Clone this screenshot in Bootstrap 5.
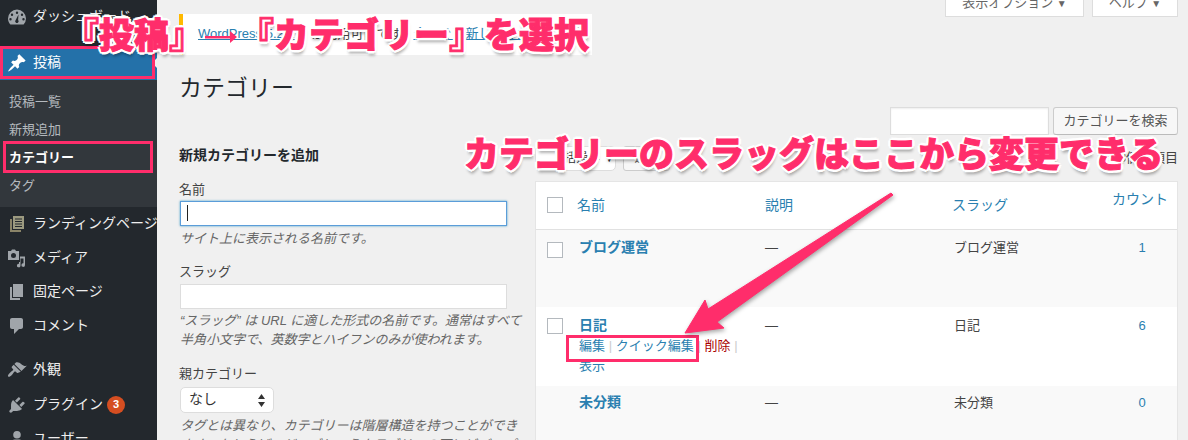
<!DOCTYPE html>
<html lang="ja">
<head>
  <meta charset="UTF-8">
  <title>カテゴリー</title>
  <link href="https://cdn.jsdelivr.net/npm/bootstrap@5.3.2/dist/css/bootstrap.min.css" rel="stylesheet">
  <style>
    html, body { height: 440px; overflow: hidden; }
    body { background: #f0f0f0; color: #444; font: 13px/1.4 "Liberation Sans", "Noto Sans CJK JP", sans-serif; }
    a { color: #2a7fb0; text-decoration: none; }
    .wp-root { height: 440px; overflow: hidden; }

    /* sidebar */
    .wp-side { width: 157px; flex: none; background: #23282d; height: 440px; overflow: hidden; }
    .side-item { height: 34px; padding-left: 7px; gap: 6px; color: #eee; font-size: 14px; white-space: nowrap; overflow: hidden; }
    .side-item svg { width: 20px; height: 20px; flex: none; fill: #a0a5aa; }
    .side-sep { margin-top: 12px; }
    .side-sep2 { margin-top: 10px; }
    .side-tall { height: 35px; }
    .side-current { background: #2471a9; color: #fff; position: relative; }
    .side-current svg { fill: #fff; }
    .side-current::after { content: ""; position: absolute; right: 0; top: 12px; border: 5px solid transparent; border-right-color: #f0f0f0; border-left: 0; }
    .side-sub { background: #32373c; padding: 8px 0 7px 9px; }
    .side-sub a { display: block; height: 28px; line-height: 28px; color: #b4b9be; font-size: 13px; }
    .side-sub a.now { color: #fff; font-weight: 700; }
    .up-badge { width: 18px; height: 18px; border-radius: 50%; background: #d54e21; color: #fff; font-size: 11px; font-weight: 700; margin-left: -2px; }

    /* main column */
    .wp-main { width: 1031px; padding: 0 10px 0 23px; }
    .meta-row { height: 14px; gap: 8px; }
    .meta-tab { height: 28px; margin-top: -11px; background: #fff; border: 1px solid #ddd; color: #666; font-size: 13px; line-height: 26px; text-align: center; }
    .meta-tab small { font-size: 10px; }
    .meta-a { width: 139px; }
    .meta-b { width: 86px; }
    .wp-notice { width: 413px; height: 41px; margin-left: -1px; background: #fff; border-left: 4px solid #ffb900; padding: 11px 0 0 15px; font-size: 13px; white-space: nowrap; overflow: hidden; }
    .wp-notice a { text-decoration: underline; }
    .notice-rest { margin-left: 17px; }
    .wp-title { font-size: 23px; font-weight: 400; line-height: 30px; color: #23282d; margin: 18px 0 0 -1px; }
    .search-row { margin-top: 4px; gap: 4px; }
    .wp-input { height: 28px; background: #fff; border: 1px solid #ddd; box-shadow: inset 0 1px 2px rgba(0,0,0,.07); }
    .search-box { width: 159px; }
    .wp-btn { width: 125px; height: 28px; background: #f7f7f7; border: 1px solid #ccc; border-bottom-color: #bbb; border-radius: 3px; color: #555; font-size: 13px; line-height: 26px; text-align: center; white-space: nowrap; }

    /* left form */
    .form-col { width: 327px; flex: none; padding-top: 10px; }
    .form-head { font-size: 14px; font-weight: 700; line-height: 20px; color: #23282d; margin: 0 0 16px -1px; }
    .form-lab { display: block; font-size: 13px; line-height: 18px; color: #444; margin-left: -1px; }
    .form-box { height: 25px; margin-top: 3px; background: #fff; border: 1px solid #ddd; }
    .form-box.on { margin-top: 2px; border-color: #5b9dd9; box-shadow: 0 0 2px rgba(30,140,190,.8); padding: 3px 0 0 6px; }
    .caret-bar { display: block; width: 1px; height: 16px; background: #222; }
    .form-help { font-size: 13px; line-height: 19px; font-style: italic; color: #666; margin: 2px 0 0; white-space: nowrap; }
    .form-help.lo { margin-top: 3px; }
    .gap-a { margin-top: 15px; }
    .gap-b { margin-top: 16px; }
    .parent-select { width: 94px; height: 26px; margin-top: 4px; background: #fff; border: 1px solid #ddd; border-radius: 5px; padding: 0 8px; font-size: 14px; color: #333; }
    .spin-arrows { width: 7px; height: 13px; fill: #333; }

    /* right table */
    .list-col { width: 643px; margin-left: 28px; flex: none; margin-top: 11px; }
    .nav-row { height: 35px; gap: 7px; }
    .bulk-box { width: 81px; height: 25px; background: #fff; border: 1px solid #ddd; border-radius: 5px; font-size: 12px; color: #333; line-height: 23px; padding-left: 28px; white-space: nowrap; overflow: hidden; }
    .apply-box { width: 47px; height: 25px; background: #f7f7f7; border: 1px solid #ccc; border-radius: 3px; font-size: 12px; line-height: 23px; text-align: center; color: #555; }
    .item-count { font-size: 13px; color: #444; line-height: 24px; }
    .list-wrap { background: #fff; border: 1px solid #e5e5e5; }
    .cat-table { --bs-table-bg: transparent; table-layout: fixed; font-size: 13px; margin: 0; }
    .cat-table > :not(caption) > * > * { padding: 8px 10px 10px; color: #444; box-shadow: none; vertical-align: top; }
    .cat-table thead th { height: 47px; font-weight: 400; font-size: 14px; padding: 14px 10px 10px 8px; border-bottom: 1px solid #e1e1e1; }
    .cat-table thead th.col-desc { padding-left: 10px; }
    .cat-table td { font-size: 13px; line-height: 19px; }
    .col-cb { width: 33px; }
    .col-name { width: 186px; }
    .col-desc { width: 189px; }
    .col-slug { width: 159px; }
    .cat-table > :not(caption) > * > .cell-count { text-align: center; padding-left: 7px; padding-right: 3px; }
    .cat-table thead th.cell-count { padding: 8px 5px 10px; }
    .cat-table > tbody > tr.alt-row > * { background: #f9f9f9; }
    .row-a td { height: 78px; }
    .cat-table > tbody > .row-b > td { height: 76px; padding-top: 9px; }
    .cat-table > tbody > .row-c > td { height: 60px; padding-top: 7px; }
    .cat-table > tbody > tr > td.cell-cb { padding: 12px 0 0 11px; }
    .cat-table > thead > tr > th.cell-cb { padding: 15px 0 0 11px; }
    .row-b .fake-check { margin-top: -1px; }
    .fake-check { display: block; width: 16px; height: 16px; background: #fff; border: 1px solid #b4b9be; }
    .cat-name { font-size: 14px; font-weight: 700; line-height: 18px; display: block; }
    .row-acts { font-size: 13px; line-height: 20px; margin-top: 2px; }
    .row-acts i { color: #ccc; font-style: normal; padding: 0 3.7px; }
    .act-del { color: #a00; }

    /* annotations over the screenshot */
    .anno { position: absolute; color: #ff2d6b; font-family: "Noto Sans CJK JP", sans-serif; font-weight: 900; font-size: 35px; line-height: 40px; white-space: nowrap;
      -webkit-text-stroke: 1px #ff2d6b;
      text-shadow: 3px 0 #fff, -3px 0 #fff, 0 3px #fff, 0 -3px #fff, 2px 2px #fff, -2px 2px #fff, 2px -2px #fff, -2px -2px #fff, 1px 5px 3px rgba(0,0,0,.3); }
    .anno-one { left: 64px; top: 13px; }
    .anno-two { left: 464px; top: 132px; }
    .anno-arrow { width: 32px; height: 16px; margin: 0 2px 0 1px; vertical-align: 3px; position: relative; z-index: 1; }
    .pink-box { position: absolute; border: 3px solid #ff2d6b; }
    .box-post { left: 0; top: 46px; width: 155px; height: 33px; }
    .box-cat { left: 3px; top: 141px; width: 150px; height: 32px; }
    .box-edit { left: 566px; top: 335px; width: 133px; height: 27px; }
    .big-arrow { position: absolute; left: 670px; top: 185px; width: 240px; height: 160px; filter: drop-shadow(1px 2px 2px rgba(0,0,0,.35)); }
  </style>
</head>
<body>
<div class="wp-root d-flex position-relative">

  <nav class="wp-side">
    <div class="side-item d-flex align-items-center">
      <svg viewBox="0 0 20 20"><path d="M10 2.500a9 9 0 0 0-9 9c0 2.400.9 4.500 2.400 6h13.200a9 9 0 0 0 2.400-6 9 9 0 0 0-9-9zM10 4.500a1.200 1.200 0 1 1 0 2.400 1.200 1.200 0 0 1 0-2.400zM5 6.500a1.200 1.200 0 1 1 0 2.400 1.200 1.200 0 0 1 0-2.400zM15 6.500a1.200 1.200 0 1 1 0 2.400 1.200 1.200 0 0 1 0-2.400zM3.500 11a1.200 1.200 0 1 1 0 2.400 1.200 1.200 0 0 1 0-2.400zM16.500 11a1.200 1.200 0 1 1 0 2.400 1.200 1.200 0 0 1 0-2.400zM11.500 7.500l-.4 5.500a1.700 1.700 0 1 1-2.400 0z" fill-rule="evenodd"/></svg>
      <span>ダッシュボード</span>
    </div>
    <div class="side-item side-current side-sep d-flex align-items-center">
      <svg viewBox="0 0 20 20"><path d="M10.44 3.02l1.82-1.820 6.360 6.350-1.830 1.820c-1.050-.68-2.480-.57-3.410.36l-.75.75c-.92.93-1.040 2.350-.35 3.410l-1.830 1.820-2.410-2.410-2.800 2.790c-.42.42-3.380 2.710-3.800 2.290s1.860-3.390 2.280-3.810l2.790-2.790L4.100 9.360l1.830-1.820c1.050.69 2.480.57 3.400-.36l.75-.75c.93-.92 1.050-2.350.36-3.410z"/></svg>
      <span>投稿</span>
    </div>
    <div class="side-sub">
      <a href="#">投稿一覧</a>
      <a href="#">新規追加</a>
      <a href="#" class="now">カテゴリー</a>
      <a href="#">タグ</a>
    </div>
    <div class="side-item d-flex align-items-center">
      <svg viewBox="0 0 20 20"><path d="M3 5h2v11h9v2H3z" fill="#8a8468"/><path d="M6 2h11v13H6zM8 4.500v1h7v-1zM8 7v1h7V7zM8 9.500v1h7v-1zM8 12v1h7v-1z" fill-rule="evenodd" fill="#9c9a80"/></svg>
      <span>ランディングページ</span>
    </div>
    <div class="side-item d-flex align-items-center">
      <svg viewBox="0 0 20 20"><path d="M1 3h3l1-1.500h3L9 3h3v9H1zM6.500 5a2.500 2.500 0 1 0 0 5 2.500 2.500 0 0 0 0-5z" fill-rule="evenodd"/><path d="M18 8.500V17a1.800 1.800 0 1 1-1.500-1.700V10.500h-3v7a1.800 1.800 0 1 1-1.500-1.700V14h1V8.500z"/></svg>
      <span>メディア</span>
    </div>
    <div class="side-item d-flex align-items-center">
      <svg viewBox="0 0 20 20"><path d="M6 15V2h10v13H6zm-1 1h8v2H3V5h2v11z"/></svg>
      <span>固定ページ</span>
    </div>
    <div class="side-item d-flex align-items-center">
      <svg viewBox="0 0 20 20"><path d="M5 2h9c1.100 0 2 .9 2 2v7c0 1.100-.9 2-2 2h-2l-5 5v-5H5c-1.100 0-2-.9-2-2V4c0-1.100.9-2 2-2z"/></svg>
      <span>コメント</span>
    </div>
    <div class="side-item side-sep2 d-flex align-items-center">
      <svg viewBox="0 0 20 20"><path d="M14.480 11.060L7.410 3.990l1.500-1.500c.5-.56 2.300-.47 3.510.32 1.210.8 1.430 1.280 2.910 2.100 1.180.64 2.450 1.260 4.450.85zm-.71.71L6.700 4.700 4.930 6.470c-.39.39-.39 1.020 0 1.410l1.060 1.060c.39.39.39 1.030 0 1.420-.6.6-1.430 1.110-2.210 1.690-.35.26-.7.53-1.010.84-1.340 1.340-2.370 2.870-1.580 3.660.79.79 2.320-.24 3.640-1.580.31-.31.58-.66.84-1.010.58-.78 1.090-1.610 1.690-2.210.39-.39 1.020-.39 1.410 0l1.060 1.060c.39.39 1.020.39 1.410 0z"/></svg>
      <span>外観</span>
    </div>
    <div class="side-item side-tall d-flex align-items-center">
      <svg viewBox="0 0 20 20"><path d="M13.110 4.360L9.870 7.600 8 5.730l3.240-3.240c.35-.34 1.050-.2 1.560.32.52.51.66 1.210.31 1.550zm-8 1.770l.91-1.120 9.010 9.010-1.190.84c-.71.71-2.630 1.160-3.820 1.160H6.140L4.900 17.260c-.59.59-1.540.59-2.120 0-.59-.58-.59-1.530 0-2.120l1.240-1.240v-3.880c0-1.130.4-3.190 1.090-3.890zm7.260 3.970l3.240-3.240c.34-.35 1.040-.21 1.550.31.52.51.66 1.210.31 1.550l-3.240 3.250z"/></svg>
      <span>プラグイン</span>
      <span class="up-badge d-flex align-items-center justify-content-center">3</span>
    </div>
    <div class="side-item d-flex align-items-center">
      <svg viewBox="0 0 20 20"><path d="M10 2a3.800 3.800 0 1 1 0 7.600A3.800 3.800 0 0 1 10 2zM3 18v-3c0-2.500 2.500-4.500 4.500-4.500h5c2 0 4.500 2 4.500 4.500v3z"/></svg>
      <span>ユーザー</span>
    </div>
  </nav>

  <main class="wp-main">
    <div class="meta-row d-flex justify-content-end">
      <div class="meta-tab meta-a">表示オプション <small>▼</small></div>
      <div class="meta-tab meta-b">ヘルプ <small>▼</small></div>
    </div>
    <div class="wp-notice"><a href="#">WordPress 5.2.2</a><span class="notice-rest">が利用可能です ! </span><a href="#">今すぐ更新してください。</a></div>
    <h1 class="wp-title">カテゴリー</h1>
    <div class="search-row d-flex justify-content-end">
      <div class="wp-input search-box"></div>
      <div class="wp-btn">カテゴリーを検索</div>
    </div>

    <div class="d-flex">
      <section class="form-col">
        <h2 class="form-head">新規カテゴリーを追加</h2>
        <label class="form-lab">名前</label>
        <div class="form-box on"><span class="caret-bar"></span></div>
        <p class="form-help lo">サイト上に表示される名前です。</p>
        <label class="form-lab gap-a">スラッグ</label>
        <div class="form-box"></div>
        <p class="form-help">“スラッグ” は URL に適した形式の名前です。通常はすべて<br>半角小文字で、英数字とハイフンのみが使われます。</p>
        <label class="form-lab gap-b">親カテゴリー</label>
        <div class="parent-select d-flex align-items-center justify-content-between">
          <span>なし</span>
          <svg class="spin-arrows" viewBox="0 0 7 13"><path d="M3.500 0L7 5H0zM3.500 13L0 8h7z"/></svg>
        </div>
        <p class="form-help lo">タグとは異なり、カテゴリーは階層構造を持つことができ<br>ます。たとえば、ジャズというカテゴリーの下にビバップ</p>
      </section>

      <section class="list-col">
        <div class="nav-row d-flex align-items-start">
          <div class="bulk-box">括操作 ▼</div>
          <div class="apply-box">適用</div>
          <div class="item-count ms-auto">3個の項目</div>
        </div>
        <div class="list-wrap">
          <table class="table table-borderless cat-table">
            <thead>
              <tr>
                <th class="col-cb cell-cb"><span class="fake-check"></span></th>
                <th class="col-name"><a href="#">名前</a></th>
                <th class="col-desc"><a href="#">説明</a></th>
                <th class="col-slug"><a href="#">スラッグ</a></th>
                <th class="cell-count"><a href="#">カウント</a></th>
              </tr>
            </thead>
            <tbody>
              <tr class="alt-row row-a">
                <td class="cell-cb"><span class="fake-check"></span></td>
                <td><a href="#" class="cat-name">ブログ運営</a></td>
                <td>—</td>
                <td>ブログ運営</td>
                <td class="cell-count"><a href="#">1</a></td>
              </tr>
              <tr class="row-b">
                <td class="cell-cb"><span class="fake-check"></span></td>
                <td>
                  <a href="#" class="cat-name">日記</a>
                  <div class="row-acts"><a href="#">編集</a><i>|</i><a href="#">クイック編集</a><i>|</i><a href="#" class="act-del">削除</a><i>|</i><a href="#">表示</a></div>
                </td>
                <td>—</td>
                <td>日記</td>
                <td class="cell-count"><a href="#">6</a></td>
              </tr>
              <tr class="alt-row row-c">
                <td class="cell-cb"></td>
                <td><a href="#" class="cat-name">未分類</a></td>
                <td>—</td>
                <td>未分類</td>
                <td class="cell-count"><a href="#">0</a></td>
              </tr>
            </tbody>
          </table>
        </div>
      </section>
    </div>
  </main>

  <div class="pink-box box-post"></div>
  <div class="pink-box box-cat"></div>
  <div class="pink-box box-edit"></div>
  <svg class="big-arrow" viewBox="670 185 240 160"><path d="M893 195L717 322 724 328 685 333 705 300 708 309 891 193z" fill="#ff2d6b" stroke="#ff2d6b" stroke-width="1" stroke-linejoin="round"/></svg>
  <div class="anno anno-one">『投稿』<svg class="anno-arrow" viewBox="0 0 32 16"><path d="M0 7h25V2l7 6-7 6V9.500H0z" fill="#ff2d6b"/></svg>『カテゴリー』を選択</div>
  <div class="anno anno-two">カテゴリーのスラッグはここから変更できる</div>
</div>
<script src="https://cdn.jsdelivr.net/npm/bootstrap@5.3.2/dist/js/bootstrap.bundle.min.js"></script>
</body>
</html>
